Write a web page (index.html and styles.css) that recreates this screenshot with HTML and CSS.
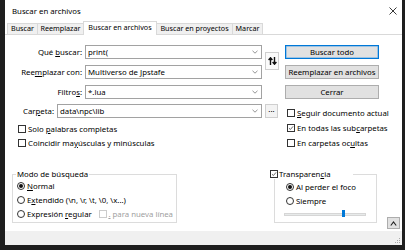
FILE: index.html
```html
<!DOCTYPE html>
<html lang="es">
<head>
<meta charset="utf-8">
<title>Buscar en archivos</title>
<link rel="stylesheet" href="styles.css">
</head>
<body>
<div class="window">
  <div class="titlebar">
    <span class="title">Buscar en archivos</span>
    <svg class="close" width="8" height="8" viewBox="0 0 8 8"><path d="M0.5 0.5L7.5 7.5M7.5 0.5L0.5 7.5" stroke="#222" stroke-width="0.9" fill="none"/></svg>
  </div>
  <div class="tabs">
    <div class="tab w-buscar">Buscar</div>
    <div class="tab w-reemp">Reemplazar</div>
    <div class="tab active w-arch">Buscar en archivos</div>
    <div class="tab w-proy">Buscar en proyectos</div>
    <div class="tab w-marcar">Marcar</div>
  </div>
  <div class="panel">
    <div class="top">
      <div class="fields">
        <div class="lbl"><span>Qué <u>b</u>uscar:</span></div>
        <div class="combo"><span>print(</span><svg class="arrow" width="6" height="4" viewBox="0 0 6 4"><path d="M0.5 0.8L3 3.2L5.5 0.8" stroke="#777" stroke-width="0.8" fill="none"/></svg></div>
        <div class="lbl"><span>Ree<u>m</u>plazar con:</span></div>
        <div class="combo"><span>Multiverso de Jpstafe</span><svg class="arrow" width="6" height="4" viewBox="0 0 6 4"><path d="M0.5 0.8L3 3.2L5.5 0.8" stroke="#777" stroke-width="0.8" fill="none"/></svg></div>
        <div class="lbl"><span>Filtro<u>s</u>:</span></div>
        <div class="combo"><span>*.lua</span><svg class="arrow" width="6" height="4" viewBox="0 0 6 4"><path d="M0.5 0.8L3 3.2L5.5 0.8" stroke="#777" stroke-width="0.8" fill="none"/></svg></div>
      </div>
      <div class="swap">
        <svg width="9" height="8" viewBox="0 0 9 8"><path d="M2.5 8V1.2M0.6 3L2.5 0.8L4.4 3M6.5 0V6.8M4.6 5L6.5 7.2L8.4 5" stroke="#111" stroke-width="1.4" fill="none"/></svg>
      </div>
      <div class="actions">
        <div class="btn default">Buscar todo</div>
        <div class="btn">Reemplazar en archivos</div>
        <div class="btn">Cerrar</div>
      </div>
    </div>
    <div class="middle">
      <div class="mid-left">
        <div class="folder-row">
          <div class="lbl folder-lbl"><span>Car<u>p</u>eta:</span></div>
          <div class="combo folder"><span>data\npc\lib</span><svg class="arrow" width="6" height="4" viewBox="0 0 6 4"><path d="M0.5 0.8L3 3.2L5.5 0.8" stroke="#777" stroke-width="0.8" fill="none"/></svg></div>
          <div class="dots">...</div>
        </div>
        <div class="checks-left">
          <div class="chk"><span class="box"></span><span>Solo <u>p</u>alabras completas</span></div>
          <div class="chk"><span class="box"></span><span>Coincidir ma<u>y</u>úsculas y minúsculas</span></div>
        </div>
      </div>
      <div class="mid-right">
        <div class="chk row15"><span class="box"></span><span><u>S</u>eguir documento actual</span></div>
        <div class="chk row15"><span class="box checked"><svg width="8" height="8" viewBox="0 0 8 8"><path d="M1.3 4.2L3.2 6L6.8 1.8" stroke="#222" stroke-width="0.9" fill="none"/></svg></span><span>En todas las sub<u>c</u>arpetas</span></div>
        <div class="chk row15"><span class="box"></span><span>En carpetas oc<u>u</u>ltas</span></div>
      </div>
    </div>
    <div class="bottom">
      <fieldset class="group mode">
        <legend class="mode-legend">Modo de búsqueda</legend>
        <div class="radio-row"><span class="radio on"></span><span><u>N</u>ormal</span></div>
        <div class="radio-row"><span class="radio"></span><span>E<u>x</u>tendido (\n, \r, \t, \0, \x...)</span></div>
        <div class="radio-row"><span class="radio"></span><span>Expresión <u>r</u>egular</span>
          <span class="disabled-chk"><span class="box dis"></span><span><u>.</u> para nueva línea</span></span>
        </div>
      </fieldset>
      <fieldset class="group transp">
        <legend class="transp-legend"><span class="box checked"><svg width="8" height="8" viewBox="0 0 8 8"><path d="M1.3 4.2L3.2 6L6.8 1.8" stroke="#222" stroke-width="0.9" fill="none"/></svg></span><span>Transparen<u>c</u>ia</span></legend>
        <div class="radio-row"><span class="radio on"></span><span>Al perder el foco</span></div>
        <div class="radio-row"><span class="radio"></span><span>Siempre</span></div>
        <div class="slider"><span class="track"></span><span class="thumb"></span></div>
      </fieldset>
      <div class="collapse">
        <svg width="7" height="5" viewBox="0 0 7 5"><path d="M0.8 4.5L3.5 1L6.2 4.5" stroke="#222" stroke-width="1.1" fill="none"/></svg>
      </div>
    </div>
  </div>
  <div class="statusbar">
    <svg class="grip" width="6" height="6" viewBox="0 0 6 6"><g fill="#a8a8a8"><rect x="4" y="0" width="1" height="1"/><rect x="2" y="2" width="1" height="1"/><rect x="4" y="2" width="1" height="1"/><rect x="0" y="4" width="1" height="1"/><rect x="2" y="4" width="1" height="1"/><rect x="4" y="4" width="1" height="1"/></g></svg>
  </div>
</div>
</body>
</html>
```
FILE: styles.css
```css
* { box-sizing: border-box; }
body {
  margin: 0;
  width: 405px;
  height: 250px;
  overflow: hidden;
  background: #1e1e1e;
  font-family: "Noto Sans", sans-serif;
  font-size: 7.8px;
  color: #000;
}
u { text-decoration-thickness: 0.5px; text-underline-offset: 1px; }
.window {
  margin-left: 5px;
  width: 397px;
  height: 245px;
  background: #fff;
  display: flex;
  flex-direction: column;
}
.titlebar {
  height: 21px;
  flex: none;
  display: flex;
  align-items: center;
  justify-content: space-between;
  padding: 0 5px 0 7px;
  font-size: 7.8px;
}
.tabs {
  height: 14px;
  flex: none;
  display: flex;
  align-items: flex-end;
  padding-left: 2px;
  border-bottom: 1px solid #d9d9d9;
  font-size: 7.2px;
}
.tab {
  height: 11px;
  border: 1px solid #d9d9d9;
  border-bottom: none;
  margin-right: -1px;
  background: #f0f0f0;
  display: flex;
  align-items: center;
  justify-content: center;
  line-height: 1;
  white-space: nowrap;
}
.tab.active {
  height: 14px;
  margin-bottom: -1px;
  background: #fff;
  position: relative;
  padding-bottom: 2px;
}
.w-buscar { width: 31px; }
.w-reemp { width: 47px; }
.w-arch { width: 74px; }
.w-proy { width: 77px; }
.w-marcar { width: 31px; }
.panel {
  flex: 1;
  padding-top: 10px;
  display: flex;
  flex-direction: column;
}
.top { display: flex; align-items: flex-start; }
.fields {
  display: grid;
  grid-template-columns: 77px 177px;
  grid-auto-rows: 14px;
  column-gap: 3px;
  row-gap: 6px;
}
.lbl {
  display: flex;
  align-items: center;
  justify-content: flex-end;
  white-space: nowrap;
}
.combo {
  border: 1px solid #a2a2a2;
  display: flex;
  align-items: center;
  justify-content: space-between;
  padding: 0 3px 0 2px;
  white-space: nowrap;
}
.arrow { flex: none; }
.swap {
  margin-left: 3px;
  margin-top: 7px;
  width: 14px;
  height: 18px;
  border: 1px solid #cfcfcf;
  background: #fbfbfb;
  display: flex;
  align-items: center;
  justify-content: center;
}
.actions {
  margin-left: 6px;
  width: 94px;
  display: flex;
  flex-direction: column;
  gap: 6px;
}
.btn {
  height: 14px;
  border: 1px solid #adadad;
  background: #e1e1e1;
  display: flex;
  align-items: center;
  justify-content: center;
  white-space: nowrap;
}
.btn.default { border-color: #0078d7; box-shadow: inset 0 0 0 0.5px #5aa6e6; }
.middle { display: flex; margin-top: 5px; }
.mid-left { width: 273px; }
.folder-row { display: flex; height: 14px; gap: 3px; }
.folder-lbl { width: 49px; flex: none; }
.combo.folder { width: 205px; flex: none; }
.dots {
  width: 13px;
  flex: none;
  border: 1px solid #cfcfcf;
  background: #f3f3f3;
  display: flex;
  align-items: center;
  justify-content: center;
  line-height: 1;
  padding-bottom: 2px;
}
.checks-left { padding-left: 13px; margin-top: 4px; }
.chk {
  height: 14px;
  display: flex;
  align-items: center;
  gap: 2px;
  white-space: nowrap;
}
.chk.row15 { height: 15px; }
.mid-right { margin-left: 9px; padding-top: 1px; }
.box {
  width: 8px;
  height: 8px;
  flex: none;
  border: 1px solid #333;
  background: #fff;
  display: inline-flex;
  align-items: center;
  justify-content: center;
}
.box svg { display: block; }
.box.dis { border-color: #cccccc; }
.bottom {
  display: flex;
  align-items: flex-start;
  margin-top: 19px;
}
.group {
  margin: 0;
  min-width: 0;
  border: 1px solid #dcdcdc;
}
.mode {
  margin-left: 7px;
  width: 165px;
  height: 54px;
  padding: 0 3px 0 3px;
}
.mode-legend { padding: 0 1px; line-height: 10px; height: 10px; }
.radio-row {
  height: 14px;
  display: flex;
  align-items: center;
  gap: 2px;
  white-space: nowrap;
  padding-left: 1px;
}
.radio {
  width: 8px;
  height: 8px;
  flex: none;
  border: 1px solid #333;
  border-radius: 50%;
  background: #fff;
  position: relative;
}
.radio.on::after {
  content: "";
  position: absolute;
  left: 1px;
  top: 1px;
  width: 4px;
  height: 4px;
  border-radius: 50%;
  background: #111;
}
.disabled-chk {
  margin-left: auto;
  display: flex;
  align-items: center;
  gap: 1px;
  color: #a0a0a0;
}
.transp {
  margin-left: 97px;
  width: 103px;
  height: 54px;
  padding: 1px 0 0 10px;
}
.transp-legend {
  margin-left: -15px;
  width: 83px;
  height: 10px;
  line-height: 10px;
  padding: 0;
  display: flex;
  align-items: center;
  gap: 1px;
  white-space: nowrap;
}
.slider {
  position: relative;
  height: 12px;
  width: 82px;
  margin-left: -1px;
  display: flex;
  align-items: center;
}
.track {
  width: 82px;
  height: 3px;
  background: #e7eaea;
  border: 1px solid #d6d6d6;
}
.thumb {
  position: absolute;
  left: 58px;
  top: 2px;
  width: 3px;
  height: 7px;
  background: #0078d7;
}
.collapse {
  margin-left: 10px;
  margin-top: 48px;
  width: 13px;
  height: 12px;
  border: 1px solid #adadad;
  background: #e1e1e1;
  display: flex;
  align-items: center;
  justify-content: center;
}
.statusbar {
  height: 14px;
  flex: none;
  background: #f0f0f0;
  display: flex;
  align-items: flex-end;
  justify-content: flex-end;
  padding: 0 1px 1px 0;
}
.grip { display: block; }
```
